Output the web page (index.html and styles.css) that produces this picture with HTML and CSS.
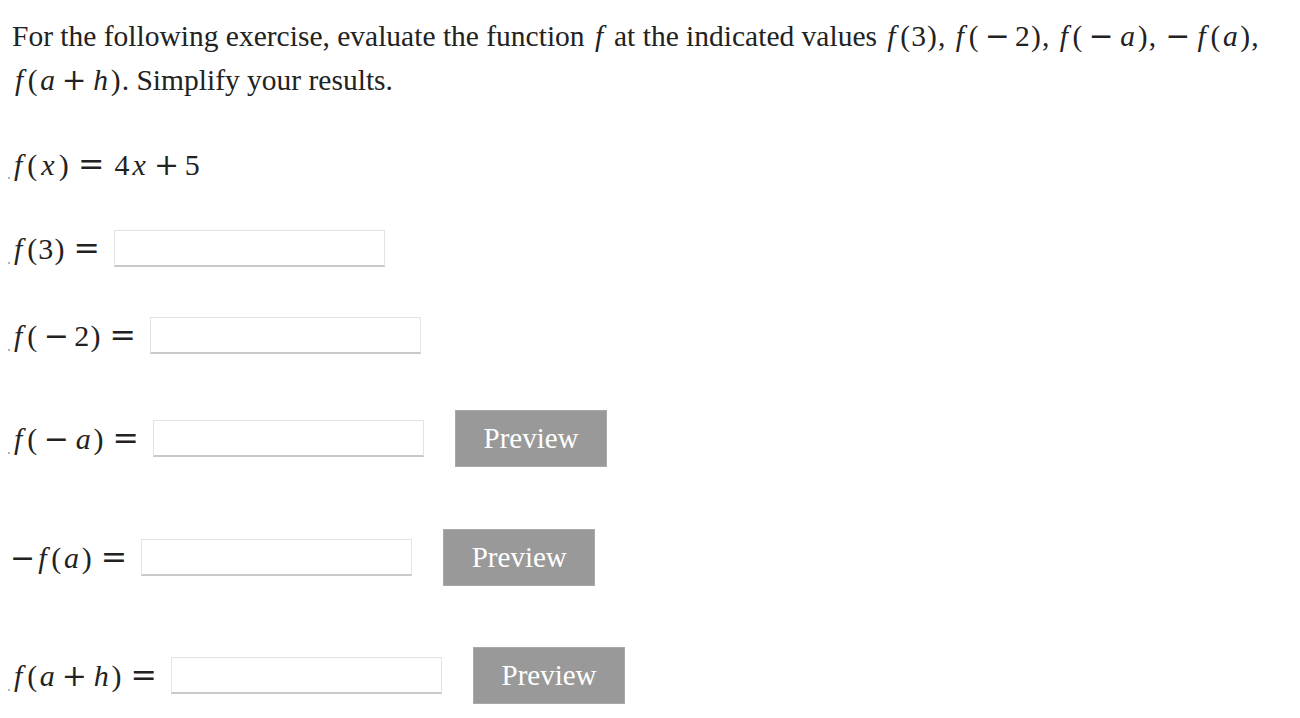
FILE: index.html
```html
<!DOCTYPE html>
<html>
<head>
<meta charset="utf-8">
<link rel="stylesheet" href="styles.css">
</head>
<body>
<div class="page">
  <p class="prompt">For the following exercise, evaluate the function <span class="m"><i class="mi f">f</i></span> at the indicated values <span class="m"><i class="mi f">f</i><span class="p">(</span>3<span class="p">)</span></span>, <span class="m"><i class="mi f">f</i><span class="p">(</span><span class="bin">−</span>2<span class="p">)</span></span>, <span class="m"><i class="mi f">f</i><span class="p">(</span><span class="bin">−</span><i class="mi v">a</i><span class="p">)</span></span>, <span class="m"><span class="neg">−</span><i class="mi f">f</i><span class="p">(</span><i class="mi v">a</i><span class="p">)</span></span>, <span class="m"><i class="mi f">f</i><span class="p">(</span><i class="mi v">a</i><span class="bin">+</span><i class="mi v">h</i><span class="p">)</span></span>. Simplify your results.</p>

  <div class="row row-def">
    <span class="m big"><span class="dot"></span><i class="mi f">f</i><span class="p">(</span><i class="mi x">x</i><span class="p">)</span><span class="rel rel-mid">=</span>4<i class="mi x">x</i><span class="bin">+</span>5</span>
  </div>

  <div class="row row-a">
    <span class="m big"><span class="dot"></span><i class="mi f">f</i><span class="p">(</span>3<span class="p">)</span><span class="rel">=</span></span>
    <input class="answer" type="text">
  </div>

  <div class="row row-b">
    <span class="m big"><span class="dot"></span><i class="mi f">f</i><span class="p">(</span><span class="bin">−</span>2<span class="p">)</span><span class="rel">=</span></span>
    <input class="answer" type="text">
  </div>

  <div class="row row-c">
    <span class="m big"><span class="dot"></span><i class="mi f">f</i><span class="p">(</span><span class="bin">−</span><i class="mi v">a</i><span class="p">)</span><span class="rel">=</span></span>
    <input class="answer" type="text">
    <button class="preview" type="button">Preview</button>
  </div>

  <div class="row row-d">
    <span class="m big"><span class="neg">−</span><i class="mi f">f</i><span class="p">(</span><i class="mi v">a</i><span class="p">)</span><span class="rel">=</span></span>
    <input class="answer" type="text">
    <button class="preview" type="button">Preview</button>
  </div>

  <div class="row row-e">
    <span class="m big"><span class="dot"></span><i class="mi f">f</i><span class="p">(</span><i class="mi v">a</i><span class="bin">+</span><i class="mi v">h</i><span class="p">)</span><span class="rel">=</span></span>
    <input class="answer" type="text">
    <button class="preview" type="button">Preview</button>
  </div>
</div>
</body>
</html>
```

FILE: styles.css
```css
html, body {
  margin: 0;
  padding: 0;
  background: #ffffff;
}

.page {
  padding: 14px 0 0 8px;
  font-family: "Liberation Serif", "Times New Roman", serif;
  color: #222222;
}

.prompt {
  margin: 0;
  padding-left: 4px;
  font-size: 29.5px;
  line-height: 44px;
  width: 1285px;
}

.m {
  white-space: nowrap;
  font-family: "Liberation Serif", serif;
  font-size: 30px;
}

.prompt .m {
  font-size: 29.5px;
}

.mi {
  font-style: italic;
}

.f {
  padding-left: 0.1em;
  padding-right: 0.12em;
}

.x {
  padding: 0 0.1em;
}

.v {
  padding: 0 0.05em;
}

.p {
  padding: 0 0.04em;
}

.rel {
  font-family: "DejaVu Serif", serif;
  font-size: 1.05em;
  margin: 0 0.1em 0 0.25em;
}

.rel-mid {
  margin-right: 0.32em;
}

.bin {
  font-family: "DejaVu Serif", serif;
  font-size: 1em;
  margin: 0 0.18em;
}

.neg {
  font-family: "DejaVu Serif", serif;
  font-size: 1em;
  margin-left: 2px;
}

.prompt .neg {
  margin-right: 0.15em;
}

.dot {
  display: inline-block;
  width: 2px;
  height: 2px;
  border-radius: 1px;
  background: #9a9a9a;
  margin-right: 1px;
  vertical-align: -0.15em;
}

.row {
  display: flex;
  align-items: center;
}

.big {
  line-height: 40px;
}

.row-def { margin-top: 42px; height: 40px; }
.row-a { margin-top: 46px; height: 37px; }
.row-b { margin-top: 50px; height: 37px; }
.row-c { margin-top: 56px; height: 57px; }
.row-d { margin-top: 62px; height: 57px; }
.row-e { margin-top: 61px; height: 57px; }

.answer {
  box-sizing: border-box;
  width: 271px;
  height: 37px;
  margin: 0 0 0 11px;
  padding: 0 6px;
  border: 1px solid #e3e3e3;
  border-bottom: 2px solid #c9c9c9;
  background: #ffffff;
  outline: none;
  font-size: 18px;
}

.preview {
  box-sizing: border-box;
  width: 152px;
  height: 57px;
  margin-left: 31px;
  padding: 0;
  border: 1px solid #a9a9a9;
  background: #999999;
  color: #ffffff;
  font-family: "Liberation Serif", "Times New Roman", serif;
  font-size: 29px;
  cursor: pointer;
}
```
